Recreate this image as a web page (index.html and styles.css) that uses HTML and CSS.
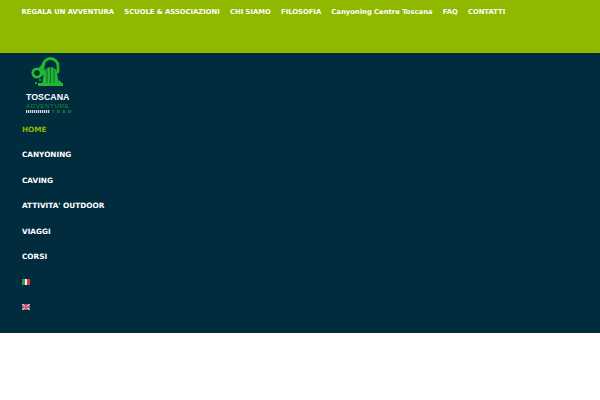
FILE: index.html
```html
<!DOCTYPE html>
<html lang="it">
<head>
<meta charset="utf-8">
<title>Toscana Adventure Team</title>
<link rel="stylesheet" href="styles.css">
</head>
<body>
<header class="topbar">
  <nav class="topnav">
    <a>REGALA UN AVVENTURA</a>
    <a>SCUOLE &amp; ASSOCIAZIONI</a>
    <a>CHI SIAMO</a>
    <a>FILOSOFIA</a>
    <a>Canyoning Centre Toscana</a>
    <a>FAQ</a>
    <a>CONTATTI</a>
  </nav>
</header>
<section class="main">
  <div class="logo">
    <svg class="logo-mark" width="44" height="36" viewBox="0 0 44 36">
      <g fill="none" stroke="#22b833" stroke-linecap="round">
        <path d="M17 16V10A7.500 7.500 0 0 1 32 10V16" stroke-width="2.800"/>
        <circle cx="11" cy="17" r="4.200" stroke-width="2.800"/>
        <path d="M13.500 13.500L18 8" stroke-width="2.800"/>
        <path d="M15 19L18 17" stroke-width="2.800"/>
      </g>
      <path d="M18.500 14Q24.500 8 30.500 14L33 28H16Z" fill="#23b535"/>
      <path d="M21 12V28M24.500 11V28M28 12V28" stroke="#0d6a3a" stroke-width="1"/>
      <path d="M12 27H37V30H12Z" fill="#22b833"/>
      <path d="M33 24L36 27H32Z" fill="#22b833"/>
      <circle cx="10" cy="27" r="1.100" fill="#22b833"/>
      <circle cx="14" cy="24" r="1.100" fill="#22b833"/>
    </svg>
    <div class="logo-title">TOSCANA</div>
    <div class="logo-sub">ADVENTURE</div>
    <div class="logo-row"><span class="logo-wave"></span><span class="logo-team">TEAM</span></div>
  </div>
  <nav class="sidenav">
    <a class="active">HOME</a>
    <a>CANYONING</a>
    <a>CAVING</a>
    <a>ATTIVITA' OUTDOOR</a>
    <a>VIAGGI</a>
    <a>CORSI</a>
    <a class="flag-item">
      <svg class="flag" width="8" height="6" viewBox="0 0 8 6"><rect width="3" height="6" fill="#2a9a4a"/><rect x="3" width="2" height="6" fill="#f2f2f2"/><rect x="5" width="3" height="6" fill="#d8343c"/></svg>
    </a>
    <a class="flag-item">
      <svg class="flag" width="8" height="6" viewBox="0 0 8 6"><rect width="8" height="6" fill="#5a4f8c"/><path d="M0 0L8 6M8 0L0 6" stroke="#f3c6d4" stroke-width="1.300"/><path d="M4 0V6M0 3H8" stroke="#e4566e" stroke-width="1.500"/></svg>
    </a>
  </nav>
</section>
</body>
</html>
```
FILE: styles.css
```css
html, body {
  margin: 0;
  padding: 0;
  background: #fff;
  font-family: "DejaVu Sans", sans-serif;
}
a {
  display: block;
  font-weight: 700;
  font-size: 7.300px;
  color: #fff;
  white-space: nowrap;
}
.topbar {
  height: 53px;
  background: #8fb800;
  box-sizing: border-box;
  padding: 7px 0 0 21.500px;
}
.topnav {
  display: flex;
  gap: 10.200px;
  line-height: 11px;
}
.topnav a {
  font-size: 6.800px;
}
.main {
  height: 280px;
  background: #012c3e;
  box-sizing: border-box;
  padding: 3px 0 0 22px;
}
.logo {
  width: 50px;
  height: 67px;
  margin-left: 4px;
  display: flex;
  flex-direction: column;
  color: #fff;
}
.logo-mark {
  display: block;
  flex: none;
}
.logo-title {
  font-family: "Liberation Sans", sans-serif;
  font-weight: 700;
  font-size: 8.800px;
  line-height: 10px;
}
.logo-sub {
  font-family: "Liberation Sans", sans-serif;
  font-size: 6.200px;
  letter-spacing: 0.550px;
  line-height: 7px;
  color: #1a8a34;
}
.logo-row {
  display: flex;
  align-items: center;
  height: 5px;
}
.logo-wave {
  width: 24px;
  height: 3px;
  background: repeating-linear-gradient(90deg, #cfd8d8 0 1px, #3d5a66 1px 2px);
}
.logo-team {
  font-family: "Liberation Sans", sans-serif;
  font-weight: 700;
  font-size: 4.400px;
  letter-spacing: 2.300px;
  line-height: 5px;
  margin-left: 2px;
  color: #1a8a34;
}
.sidenav {
  display: flex;
  flex-direction: column;
}
.sidenav a {
  height: 25.500px;
  line-height: 11px;
  box-sizing: border-box;
  padding-top: 0.800px;
}
.sidenav a.active {
  color: #8fb800;
}
.flag-item {
  display: flex;
  align-items: flex-start;
}
.flag {
  display: block;
  margin-top: 2px;
}
```
